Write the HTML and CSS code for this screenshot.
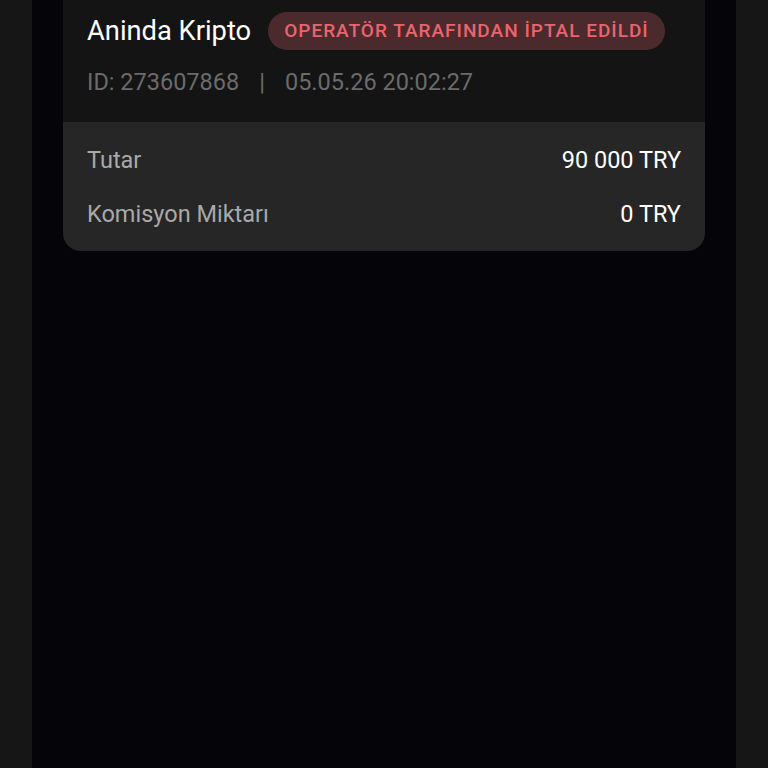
FILE: index.html
```html
<!DOCTYPE html>
<html lang="tr">
<head>
<meta charset="utf-8">
<link rel="stylesheet" href="styles.css">
</head>
<body>
<div class="screen">
  <div class="side"></div>
  <main class="center">
    <section class="card">
      <div class="card-head">
        <div class="title-row">
          <span class="title">Aninda Kripto</span>
          <span class="badge">OPERATÖR TARAFINDAN İPTAL EDİLDİ</span>
        </div>
        <div class="meta">
          <span>ID: 273607868</span>
          <span class="sep">|</span>
          <span>05.05.26 20:02:27</span>
        </div>
      </div>
      <div class="card-body">
        <div class="row">
          <span class="label">Tutar</span>
          <span class="value">90 000 TRY</span>
        </div>
        <div class="row">
          <span class="label">Komisyon Miktarı</span>
          <span class="value">0 TRY</span>
        </div>
      </div>
    </section>
  </main>
  <div class="side"></div>
</div>
</body>
</html>
```

FILE: styles.css
```css
html, body {
  margin: 0;
  padding: 0;
  height: 100%;
  background: #050509;
}
body {
  font-family: Roboto, "Noto Sans", sans-serif;
}
.screen {
  display: flex;
  height: 768px;
  width: 768px;
}
.side {
  width: 32px;
  flex: none;
  background: #161616;
}
.center {
  flex: 1;
  background: #050509;
  padding: 0 31px;
}
.card {
  border-radius: 0 0 18px 18px;
  overflow: hidden;
}
.card-head {
  background: #141414;
  padding: 12px 24px 0 24px;
  height: 122px;
  box-sizing: border-box;
}
.title-row {
  display: flex;
  align-items: center;
  gap: 17px;
  height: 38px;
}
.title {
  color: #ffffff;
  font-size: 27.3px;
  line-height: 38px;
}
.badge {
  background: #4b2a2d;
  color: #ea646d;
  font-size: 19px;
  font-weight: 500;
  letter-spacing: 1px;
  line-height: 38px;
  padding: 0 16px;
  border-radius: 19px;
  white-space: nowrap;
}
.meta {
  display: flex;
  gap: 20px;
  color: #6b6b6b;
  font-size: 23.5px;
  margin-top: 18px;
  line-height: 28px;
}
.card-body {
  background: #262626;
  padding: 24px 24px 23px 24px;
  display: flex;
  flex-direction: column;
  gap: 26px;
}
.row {
  display: flex;
  justify-content: space-between;
  font-size: 23.5px;
  line-height: 28px;
}
.label {
  color: #a9a9a9;
}
.value {
  color: #ffffff;
}
```
